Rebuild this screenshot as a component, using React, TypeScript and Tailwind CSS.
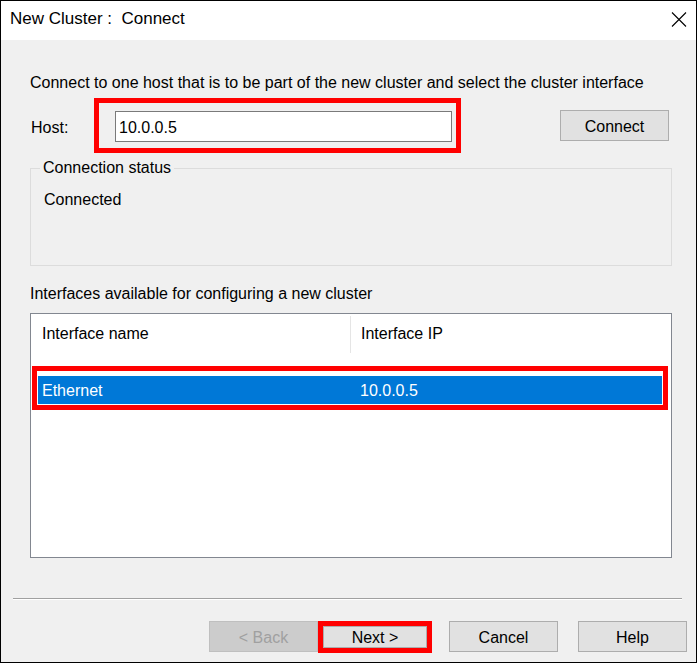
import React from 'react';

const font = { fontFamily: '"Liberation Sans", Arial, sans-serif' };

function CloseIcon() {
  return (
    <svg width="16" height="15" viewBox="0 0 16 15" className="block">
      <path d="M1 0.5 L15 14.5 M15 0.5 L1 14.5" stroke="#000" strokeWidth="1.1" fill="none" />
    </svg>
  );
}

function Button({ label, disabled }: { label: string; disabled?: boolean }) {
  return (
    <div
      className={`flex h-[31px] w-[109px] items-center justify-center border pt-[2px] text-[16px] ${
        disabled ? 'border-[#bfbfbf] bg-[#cccccc] text-[#a0a0a0]' : 'border-[#adadad] bg-[#e1e1e1] text-black'
      }`}
    >
      {label}
    </div>
  );
}

export default function App() {
  return (
    <div className="flex h-[663px] w-[697px] flex-col border border-black bg-[#f0f0f0] text-black" style={font}>
      {/* title bar */}
      <div className="flex h-[39px] items-center justify-between bg-white pb-[3px] pl-[9px] pr-[9px]">
        <span className="text-[17px] leading-[20px]">New Cluster :&nbsp; Connect</span>
        <CloseIcon />
      </div>

      <div className="flex flex-col pl-[29px] pr-[24px]">
        <p className="mt-[33px] text-[16px] leading-[20px]">
          Connect to one host that is to be part of the new cluster and select the cluster interface
        </p>

        {/* host row */}
        <div className="mt-[5px] flex h-[55px] items-center">
          <span className="w-[64px] pl-[1px] pt-[4px] text-[16px] leading-[20px]">Host:</span>
          <div className="h-[55px] w-[367px] border-[5px] border-[#ff0000] pl-[16px] pt-[8px]">
            <div className="flex h-[31px] w-[337px] items-center border border-[#7a7a7a] bg-white pl-[3px] pt-[2px] text-[16px]">
              10.0.0.5
            </div>
          </div>
          <div className="ml-auto mr-[3px]">
            <Button label="Connect" />
          </div>
        </div>

        {/* connection status group */}
        <div className="relative mt-[15px] h-[98px] border border-[#dcdcdc] pl-[13px] pt-[21px]">
          <span className="absolute -top-[11px] left-[9px] bg-[#f0f0f0] px-[3px] text-[16px] leading-[20px]">
            Connection status
          </span>
          <p className="text-[16px] leading-[20px]">Connected</p>
        </div>

        <p className="mt-[18px] text-[16px] leading-[20px]">Interfaces available for configuring a new cluster</p>

        {/* interfaces list */}
        <div className="mt-[9px] h-[245px] border border-[#828790] bg-white">
          <div className="flex h-[40px] items-center text-[16px]">
            <span className="w-[319px] pl-[11px]">Interface name</span>
            <span className="h-[37px] w-px bg-[#e5e5e5]" />
            <span className="pl-[10px]">Interface IP</span>
          </div>
          <div className="ml-px mt-[12px] h-[44px] w-[636px] border-[5px] border-[#ff0000] px-px pb-px pt-[5px]">
            <div className="flex h-[28px] items-center bg-[#0078d7] pt-[2px] text-[16px] text-white">
              <span className="w-[319px] pl-[4px]">Ethernet</span>
              <span className="pl-[3px]">10.0.0.5</span>
            </div>
          </div>
        </div>
      </div>

      {/* footer */}
      <div className="mt-[40px] pl-[12px] pr-[14px]">
        <div className="h-px bg-[#a0a0a0]" />
        <div className="h-px bg-white" />
      </div>
      <div className="mt-[21px] flex items-start pl-[208px]">
        <div className="w-[108px]">
          <Button label="< Back" disabled />
        </div>
        <div className="ml-px h-[32px] w-[114px] border-[5px] border-[#ff0000]">
          <div className="flex h-full w-full items-center justify-center border border-[#adadad] bg-[#e1e1e1] pt-[2px] text-[16px]">
            Next &gt;
          </div>
        </div>
        <div className="ml-[17px]">
          <Button label="Cancel" />
        </div>
        <div className="ml-[20px]">
          <Button label="Help" />
        </div>
      </div>
    </div>
  );
}
